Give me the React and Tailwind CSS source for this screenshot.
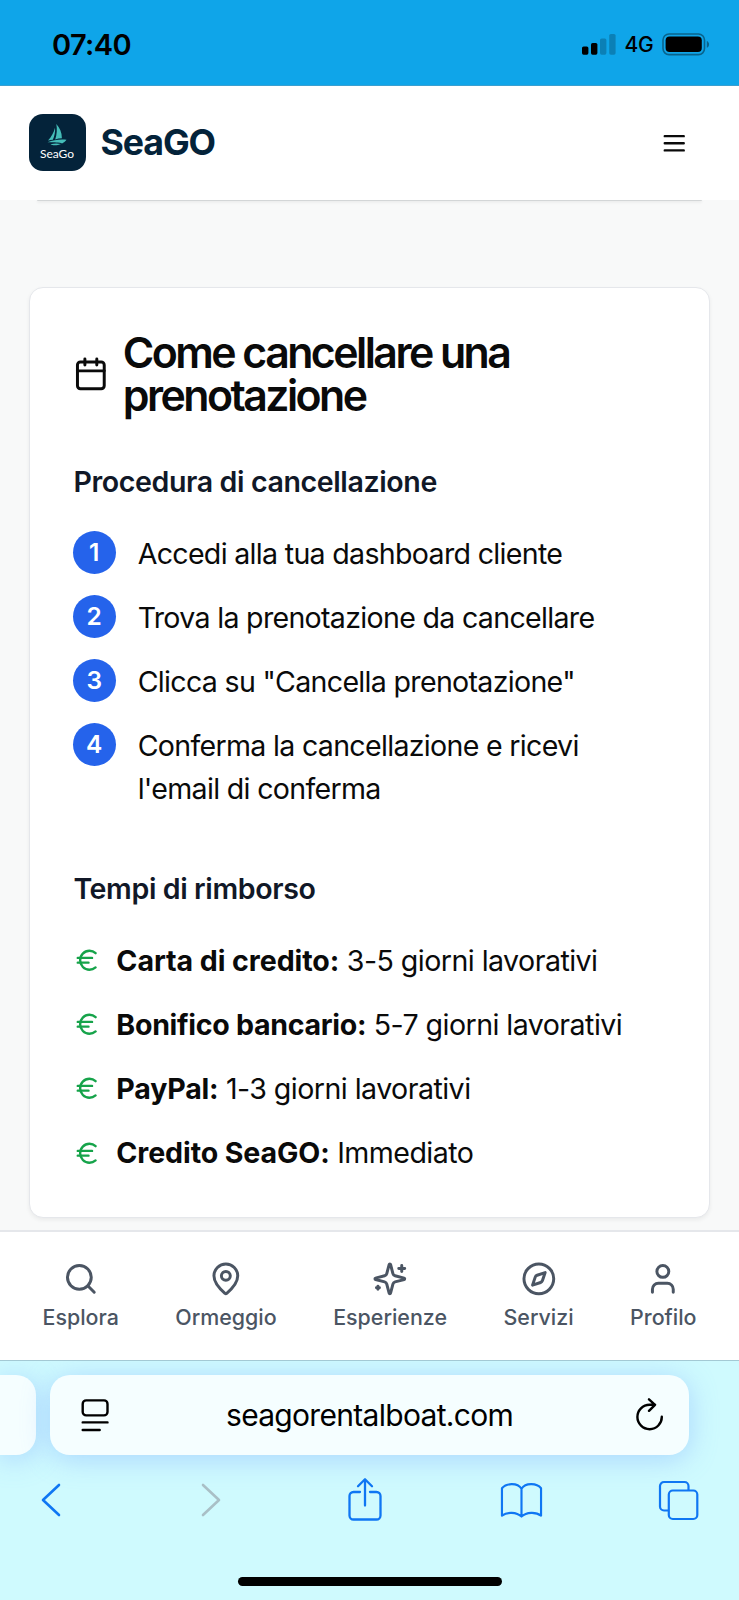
import { Calendar, Compass, Euro, MapPin, Search, User } from "lucide-react";

function Sparkles({ className }) {
  return (
    <svg viewBox="0 0 24 24" fill="none" stroke="currentColor" strokeWidth="2" strokeLinecap="round" strokeLinejoin="round" className={className}>
      <path d="M9.937 15.5A2 2 0 0 0 8.5 14.063l-6.135-1.582a.5.5 0 0 1 0-.962L8.5 9.936A2 2 0 0 0 9.937 8.5l1.582-6.135a.5.5 0 0 1 .963 0L14.063 8.5A2 2 0 0 0 15.5 9.937l6.135 1.581a.5.5 0 0 1 0 .964L15.5 14.063a2 2 0 0 0-1.437 1.437l-1.582 6.135a.5.5 0 0 1-.963 0z" />
      <path d="M20 3v4M22 5h-4M4 17v2M5 18H3" />
    </svg>
  );
}

function StatusBar() {
  return (
    <div className="flex h-[86px] shrink-0 items-center justify-between border-b border-[#3a9fd0] bg-[#0fa5e9] pr-[29.5px] pl-[52px] text-black">
      <div className="pt-1 text-[29px] leading-none font-semibold tracking-[-0.6px]">07:40</div>
      <div className="flex items-center gap-2 pt-[3px]">
        <svg viewBox="0 0 34 21" className="h-[21px] w-[34px]">
          <rect x="0" y="12.5" width="6.4" height="8.2" rx="1.6" />
          <rect x="9" y="9" width="6.4" height="11.7" rx="1.6" />
          <rect x="18" y="4.5" width="6.4" height="16.2" rx="1.6" opacity=".22" />
          <rect x="27.2" y="0" width="6.4" height="20.7" rx="1.6" opacity=".22" />
        </svg>
        <span className="text-[21px] leading-none font-medium tracking-[-0.2px]">4G</span>
        <svg viewBox="0 0 48 23" className="h-[23px] w-12">
          <rect x="1" y="1" width="41.5" height="20.6" rx="6" fill="none" stroke="#000" strokeOpacity=".4" strokeWidth="1.6" />
          <rect x="3.6" y="3.6" width="36.2" height="15.4" rx="4" />
          <path d="M44.8 8v6.8c3-1.2 3-5.6 0-6.8z" opacity=".4" />
        </svg>
      </div>
    </div>
  );
}

function Logo() {
  return (
    <div className="mb-px flex size-[57px] flex-col items-center rounded-[14px] bg-[#04233a] pt-[10px]">
      <svg viewBox="0 0 20 22" className="h-[22px] w-5" fill="#45bdb8">
        <path d="M9.3 0c3.4 3.5 5.6 8.5 5.6 14.3-2.3.1-4.5.5-6.7 1.1C9.9 10.5 10.3 5 9.3 0z" />
        <path d="M8 3.8c.5 4-.5 8.3-2.2 12-1.5 0-3.2.3-4.8.8C4.3 13 6.9 8.5 8 3.8z" />
        <path d="M.5 18.2c6-2.2 12.5-3 19-2.4-1.3 1.8-2.800 3-4.5 3.6-2.2-1-7.5-1.2-14.5-1.200z" />
        <path d="M3.5 20.2c3.5-.9 7-1 10.5-.2-3 1.2-8 2-10.5.2z" />
      </svg>
      <span className="font-['Lato',sans-serif] text-[12px] leading-[15px] font-normal text-white">SeaGo</span>
    </div>
  );
}

function Header() {
  return (
    <header className="z-10 flex h-[114px] shrink-0 items-center justify-between bg-white pr-[51px] pl-[28.5px]">
      <div className="flex items-center gap-[15px]">
        <Logo />
        <span className="text-[35.7px] leading-none font-bold tracking-[-1.1px] text-[#04233a]">SeaGO</span>
      </div>
      <svg viewBox="0 0 24 24" fill="none" stroke="#0a0a0a" strokeWidth="2" strokeLinecap="round" className="size-[28.5px]">
        <path d="M4 6h16M4 12h16M4 18h16" />
      </svg>
    </header>
  );
}

const steps = [
  ["Accedi alla tua dashboard cliente"],
  ["Trova la prenotazione da cancellare"],
  ['Clicca su "Cancella prenotazione"'],
  ["Conferma la cancellazione e ricevi", "l'email di conferma"],
];

const refunds = [
  ["Carta di credito:", "3-5 giorni lavorativi", "tracking-[-0.06px]"],
  ["Bonifico bancario:", "5-7 giorni lavorativi", "tracking-[-0.3px]"],
  ["PayPal:", "1-3 giorni lavorativi", "tracking-[-0.2px]"],
  ["Credito SeaGO:", "Immediato", "tracking-[-0.1px]"],
];

function Card() {
  return (
    <section className="rounded-[14px] border-[1.8px] border-[#e5e7eb] bg-white px-[42.8px] pt-[43.8px] pb-[43.8px] text-[28.56px] leading-[42.84px] text-[#0a0a0a] shadow-[0_2px_4px_rgba(0,0,0,0.06)]">
      <h3 className="flex items-center gap-[14.3px] text-[42.84px] leading-[42.84px] font-semibold tracking-[-2.55px]">
        <Calendar className="size-[35.7px] shrink-0" />
        <span className="-mt-px">Come cancellare una<br />prenotazione</span>
      </h3>
      <h4 className="mt-[44.84px] mb-[26.56px] pl-[0.6px] font-semibold tracking-[-0.38px] text-[#111827]">Procedura di cancellazione</h4>
      <ol className="flex flex-col gap-[21.42px]">
        {steps.map((lines, i) => (
          <li key={i} className="flex items-start gap-[22px]">
            <span className="flex size-[42.84px] shrink-0 items-center justify-center rounded-full bg-[#2563eb] text-[24.5px] font-semibold text-white">{i + 1}</span>
            <span className="-mb-[2px] pt-[2px] tracking-[-0.68px] whitespace-nowrap">
              {lines.map((l) => <span key={l} className="block">{l}</span>)}
            </span>
          </li>
        ))}
      </ol>
      <h4 className="mt-[59.12px] mb-[26.56px] pl-[0.6px] font-semibold tracking-[-0.38px] text-[#111827]">Tempi di rimborso</h4>
      <ul className="flex flex-col gap-[21.42px]">
        {refunds.map(([name, time, spacing]) => (
          <li key={name} className="flex items-center gap-[15px] whitespace-nowrap">
            <Euro className="mt-[2px] size-[28.56px] shrink-0 text-[#16a34a]" />
            <span className="-mb-[2px] pt-[2px] tracking-[-0.53px]"><strong className={`font-bold ${spacing}`}>{name}</strong> {time}</span>
          </li>
        ))}
      </ul>
    </section>
  );
}

const tabs = [
  ["Esplora", Search],
  ["Ormeggio", MapPin],
  ["Esperienze", Sparkles],
  ["Servizi", Compass],
  ["Profilo", User],
];

function TabBar() {
  return (
    <nav className="flex h-[130px] shrink-0 justify-between border-t-2 border-[#e5e7eb] bg-white pr-[42.5px] pl-[42.5px] pt-[29px] text-[#4b5563]">
      {tabs.map(([label, Icon]) => (
        <div key={label} className="flex flex-col items-center gap-[6px]">
          <Icon className="size-[35.7px]" />
          <span className="text-[21.4px] leading-[28px] font-medium">{label}</span>
        </div>
      ))}
    </nav>
  );
}

function BrowserBar() {
  return (
    <footer className="flex h-[240px] shrink-0 flex-col overflow-hidden border-t border-[#a3c9d4] bg-[#cffafe]">
      <div className="flex gap-[14px] pt-[14px]">
        <div className="h-20 w-9 rounded-r-[20px] bg-[#f5feff] shadow-[0_4px_28px_rgba(120,165,255,0.42)]" />
        <div className="flex h-20 w-[639px] items-center justify-between rounded-[20px] bg-[#f5feff] pr-[25px] pl-[31px] text-black shadow-[0_4px_28px_rgba(120,165,255,0.42)]">
          <svg viewBox="0 0 28 33" fill="none" stroke="currentColor" strokeWidth="2.4" strokeLinecap="round" className="h-[33px] w-7">
            <rect x="1.7" y="1.4" width="24.8" height="15" rx="3.5" />
            <path d="M1.7 23.4h24.8M1.7 31h17" />
          </svg>
          <span className="mr-[6px] -mt-px text-[30px] leading-none tracking-[-0.7px]">seagorentalboat.com</span>
          <svg viewBox="0 0 28 33" fill="none" stroke="currentColor" strokeWidth="2.4" strokeLinecap="round" strokeLinejoin="round" className="mb-[2px] h-[33px] w-7">
            <path d="M25.8 18.8A12.200 12.200 0 1 1 13.600 6.800h5.500M13 1.300l6 5.500-6 6" />
          </svg>
        </div>
      </div>
      <div className="flex h-[90px] items-center justify-between pr-[39px] pl-[29.5px] text-[#0f76f3] *:flex *:w-[43px] *:justify-center">
        <div>
          <svg viewBox="0 0 20 34" fill="none" stroke="currentColor" strokeWidth="2.6" strokeLinecap="round" strokeLinejoin="round" className="h-[34px] w-5">
            <path d="M18 2 2 17l16 15" />
          </svg>
        </div>
        <div className="pl-[6px]">
          <svg viewBox="0 0 20 34" fill="none" stroke="#a9bfc6" strokeWidth="2.6" strokeLinecap="round" strokeLinejoin="round" className="h-[34px] w-5">
            <path d="M2 2l16 15L2 32" />
          </svg>
        </div>
        <div className="-mt-[2px] pl-px">
          <svg viewBox="0 0 36 44" fill="none" stroke="currentColor" strokeWidth="2.3" strokeLinecap="round" strokeLinejoin="round" className="h-11 w-9">
            <path d="M13 15H6.500a4 4 0 0 0-4 4v19.500a4 4 0 0 0 4 4h23a4 4 0 0 0 4-4V19a4 4 0 0 0-4-4H23M18 28.500V2.500M11 9.200l7-7 7 7" />
          </svg>
        </div>
        <div>
          <svg viewBox="0 0 44 36" fill="none" stroke="currentColor" strokeWidth="2.2" strokeLinejoin="round" className="h-9 w-11">
            <path d="M22 6.500V35M22 6.500C18 .3 6.500.3 2 6v28c5-4 15-4 20 1 5-5 15-5 20-1V6C37.500.3 26 .3 22 6.500z" />
          </svg>
        </div>
        <div>
          <svg viewBox="0 0 41 41" fill="none" stroke="currentColor" strokeWidth="2.2" strokeLinejoin="round" className="size-[41px] shrink-0">
            <rect x="10.8" y="10.5" width="28.5" height="28.5" rx="4" />
            <path d="M10.8 30.5H6a4 4 0 0 1-4-4V6a4 4 0 0 1 4-4h20.500a4 4 0 0 1 4 4v4.500" />
          </svg>
        </div>
      </div>
      <div className="mx-auto mt-[32px] h-[9px] w-[264px] rounded-full bg-black" />
    </footer>
  );
}

export default function App() {
  return (
    <div className="flex h-[1600px] w-[739px] flex-col overflow-hidden bg-[#f8f9f9] font-['Inter',sans-serif]">
      <StatusBar />
      <Header />
      <main className="min-h-0 flex-1 px-[29px]">
        <div className="mx-[8px] h-px rounded-b-full bg-[#d3d6d7] shadow-[0_1px_3px_rgba(0,0,0,0.14)]" />
        <div className="pt-[86px]">
          <Card />
        </div>
      </main>
      <TabBar />
      <BrowserBar />
    </div>
  );
}
